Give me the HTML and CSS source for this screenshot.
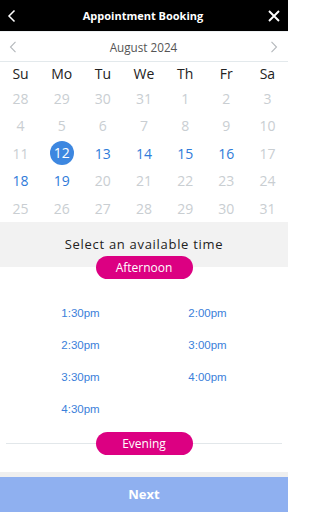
FILE: index.html
```html
<!DOCTYPE html>
<html lang="en">
<head>
<meta charset="utf-8">
<title>Appointment Booking</title>
<link rel="stylesheet" href="styles.css">
</head>
<body>
<div class="app">
  <header class="topbar">
    <button class="icon-btn" aria-label="Back">
      <svg width="10" height="14" viewBox="0 0 10 14"><path d="M7.5 1.5 L2 7 L7.5 12.5" fill="none" stroke="#fff" stroke-width="1.5"/></svg>
    </button>
    <h1 class="title">Appointment Booking</h1>
    <button class="icon-btn" aria-label="Close">
      <svg width="14" height="14" viewBox="0 0 14 14"><path d="M2 2 L12 12 M12 2 L2 12" fill="none" stroke="#fff" stroke-width="1.9"/></svg>
    </button>
  </header>

  <div class="month-bar">
    <span class="chev">
      <svg width="8" height="12" viewBox="0 0 8 12"><path d="M6.5 0.8 L1.5 6 L6.5 11.2" fill="none" stroke="#b4b8bc" stroke-width="1.1"/></svg>
    </span>
    <span class="month">August 2024</span>
    <span class="chev">
      <svg width="8" height="12" viewBox="0 0 8 12"><path d="M1.5 0.8 L6.5 6 L1.5 11.2" fill="none" stroke="#b4b8bc" stroke-width="1.1"/></svg>
    </span>
  </div>

  <div class="calendar">
    <div class="wd">Su</div><div class="wd">Mo</div><div class="wd">Tu</div><div class="wd">We</div><div class="wd">Th</div><div class="wd">Fr</div><div class="wd">Sa</div>

    <div class="day off">28</div><div class="day off">29</div><div class="day off">30</div><div class="day off">31</div><div class="day off">1</div><div class="day off">2</div><div class="day off">3</div>
    <div class="day off">4</div><div class="day off">5</div><div class="day off">6</div><div class="day off">7</div><div class="day off">8</div><div class="day off">9</div><div class="day off">10</div>
    <div class="day off">11</div><div class="day sel"><span>12</span></div><div class="day on">13</div><div class="day on">14</div><div class="day on">15</div><div class="day on">16</div><div class="day off">17</div>
    <div class="day on">18</div><div class="day on">19</div><div class="day off">20</div><div class="day off">21</div><div class="day off">22</div><div class="day off">23</div><div class="day off">24</div>
    <div class="day off">25</div><div class="day off">26</div><div class="day off">27</div><div class="day off">28</div><div class="day off">29</div><div class="day off">30</div><div class="day off">31</div>
  </div>

  <section class="time-head">
    <p class="time-title">Select an available time</p>
  </section>
  <div class="pill-row first">
    <span class="pill">Afternoon</span>
  </div>

  <div class="slots">
    <a class="slot">1:30pm</a><a class="slot">2:00pm</a>
    <a class="slot">2:30pm</a><a class="slot">3:00pm</a>
    <a class="slot">3:30pm</a><a class="slot">4:00pm</a>
    <a class="slot">4:30pm</a>
  </div>

  <div class="pill-row divider">
    <span class="pill">Evening</span>
  </div>

  <div class="spacer"></div>

  <footer class="footer">
    <button class="next">Next</button>
  </footer>
</div>
</body>
</html>
```

FILE: styles.css
```css
* { box-sizing: border-box; }
html, body { margin: 0; padding: 0; }
body {
  width: 288px;
  height: 512px;
  overflow: hidden;
  background: #fff;
  font-family: "Open Sans", "Liberation Sans", sans-serif;
}
.app {
  height: 512px;
  display: flex;
  flex-direction: column;
}
.topbar {
  height: 31px;
  background: #000;
  display: flex;
  align-items: center;
  justify-content: space-between;
  padding: 0 6px 0 4px;
}
.icon-btn {
  background: none;
  border: 0;
  padding: 0;
  width: 16px;
  height: 16px;
  display: flex;
  align-items: center;
  justify-content: center;
}
.title {
  margin: 0;
  color: #fff;
  font-size: 11px;
  font-weight: 700;
  line-height: 31px;
}
.month-bar {
  height: 31px;
  display: flex;
  align-items: center;
  justify-content: space-between;
  padding: 0 9px 0 8px;
  border-top: 1px solid #eef1f3;
  border-bottom: 1px solid #e3e9ec;
}
.chev { display: flex; width: 10px; justify-content: center; }
.month {
  font-size: 11.7px;
  color: #555;
}
.calendar {
  display: grid;
  grid-template-columns: repeat(7, 1fr);
  grid-auto-rows: 27.4px;
  grid-template-rows: 22px;
  padding-top: 1px;
}
.wd {
  font-size: 14px;
  color: #222;
  text-align: center;
  line-height: 22px;
}
.day {
  font-size: 14px;
  text-align: center;
  line-height: 27.4px;
  display: flex;
  align-items: center;
  justify-content: center;
}
.day.off { color: #c9ced2; }
.day.on { color: #2f7bd9; }
.day.sel span {
  width: 24px;
  height: 24px;
  border-radius: 50%;
  background: #3d87e0;
  color: #fff;
  display: flex;
  align-items: center;
  justify-content: center;
  line-height: 1;
  font-size: 14px;
}
.time-head {
  background: #f2f2f2;
  height: 45px;
  padding-top: 13px;
}
.time-title {
  margin: 0;
  text-align: center;
  font-size: 13px;
  letter-spacing: 0.7px;
  color: #222;
  line-height: 18px;
}
.pill-row {
  display: flex;
  justify-content: center;
}
.pill-row.first {
  margin-top: -11px;
}
.pill {
  width: 97px;
  height: 23px;
  border-radius: 12px;
  background: #dc0082;
  color: #fff;
  font-size: 12px;
  line-height: 23px;
  text-align: center;
}
.slots {
  display: grid;
  grid-template-columns: 1fr 1fr;
  grid-auto-rows: 32px;
  padding: 18px 17px 0 17px;
}
.slot {
  font-family: "Liberation Sans", Arial, sans-serif;
  font-size: 11.5px;
  color: #3b80da;
  text-align: center;
  line-height: 32px;
}
.pill-row.divider {
  margin: 7px 6px 0 6px;
  background: linear-gradient(#e2e7ea, #e2e7ea) center / 100% 1px no-repeat;
}
.spacer { flex: 1; }
.footer {
  border-top: 5px solid #efefef;
}
.next {
  display: block;
  width: 100%;
  height: 35px;
  border: 0;
  padding: 0 0 2px 0;
  background: #8fb0f0;
  color: #fff;
  font-family: "Open Sans", sans-serif;
  font-weight: 700;
  font-size: 13px;
}
```
